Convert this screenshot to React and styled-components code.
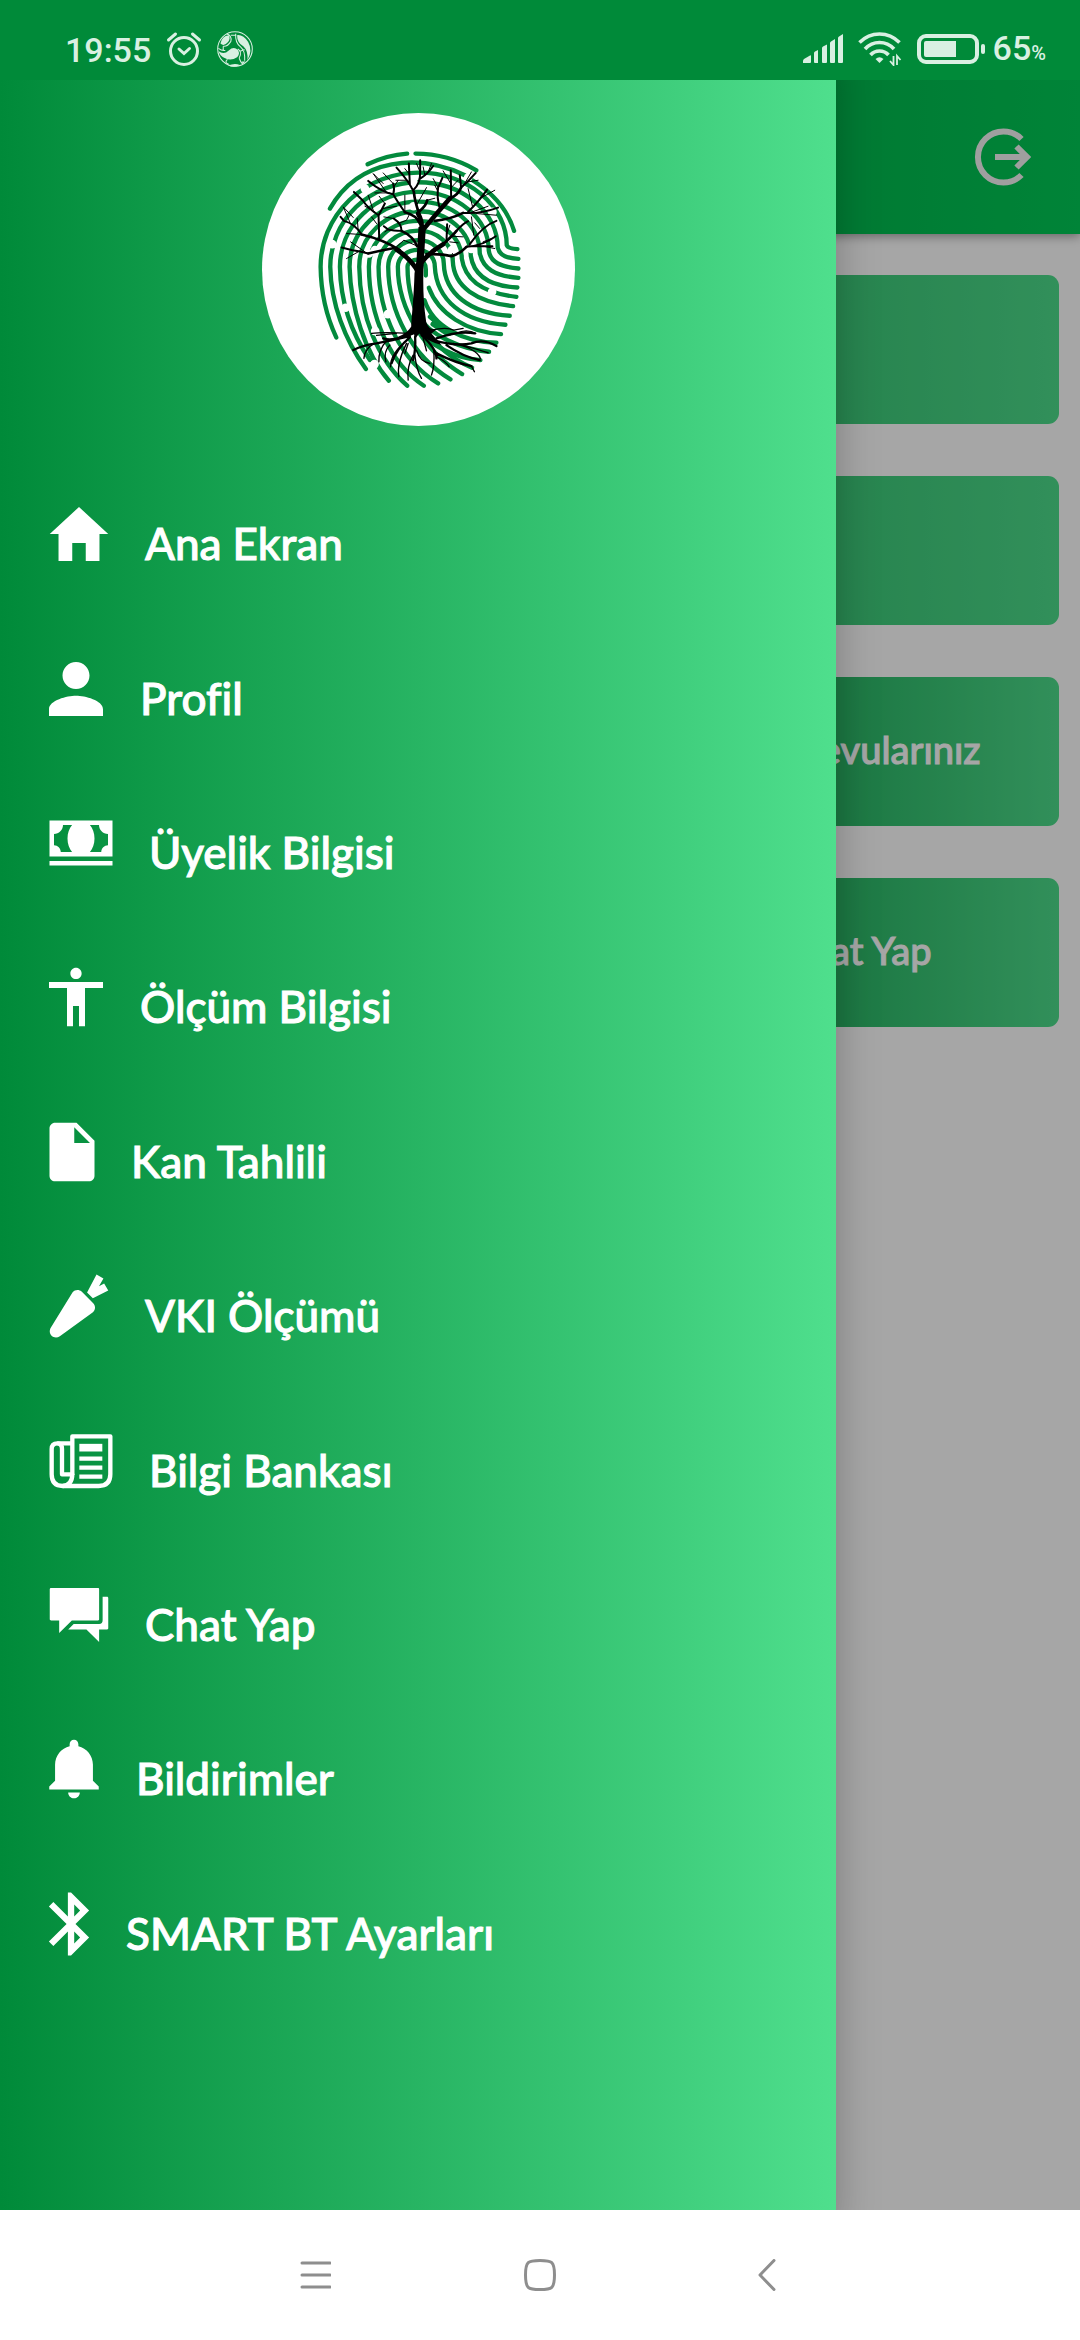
import React from 'react';
import styled, { createGlobalStyle } from 'styled-components';
import {
    IoMdHome,
    IoMdPerson,
    IoMdCash,
    IoMdBody,
    IoMdDocument,
    IoMdNutrition,
    IoMdChatboxes,
    IoMdNotifications,
    IoMdBluetooth,
} from 'react-icons/io';

const NewspaperIcon = () => (
    <svg viewBox="-13 0 216 216" fill="none" stroke="currentColor" strokeWidth="13" strokeLinejoin="round">
        <path d="M69 150 V34 H183 V148 Q183 183 148 183 H40 Q7 183 7 148 V72 Q7 55 24 55 H66" />
        <path d="M40 183 Q69 180 69 146" />
        <path d="M24 55 Q38 55 38 72 V148 H66" />
        <path d="M90 68 H159" strokeWidth="23" />
        <path d="M90 101 H159 M90 128 H159 M90 155 H159" />
    </svg>
);

// width is the drawn width of each glyph, labels start right after it
const menu = [
    { label: 'Ana Ekran', Icon: IoMdHome, width: 59 },
    { label: 'Profil', Icon: IoMdPerson, width: 54 },
    { label: 'Üyelik Bilgisi', Icon: IoMdCash, width: 63 },
    { label: 'Ölçüm Bilgisi', Icon: IoMdBody, width: 54 },
    { label: 'Kan Tahlili', Icon: IoMdDocument, width: 45 },
    { label: 'VKI Ölçümü', Icon: IoMdNutrition, width: 59 },
    { label: 'Bilgi Bankası', Icon: NewspaperIcon, width: 63 },
    { label: 'Chat Yap', Icon: IoMdChatboxes, width: 59 },
    { label: 'Bildirimler', Icon: IoMdNotifications, width: 50 },
    { label: 'SMART BT Ayarları', Icon: IoMdBluetooth, width: 40 },
];

// lower left tail and lower right head of every fingerprint ridge, outside in
const ridges = [
    { tail: '259 712 C 230 650 213 580', head: 'Q 775 445 803 447' },
    { tail: '348 807 C 285 720 243 610', head: 'C 750 468 775 474 806 476' },
    { tail: '360 780 C 305 700 272 610', head: 'C 722 488 755 500 806 505' },
    { tail: '417 842 C 345 760 302 620', head: 'C 700 505 735 528 806 533' },
    { tail: '472 857 C 385 780 330 650', head: 'C 672 525 720 558 803 562' },
    { tail: '522 857 C 420 790 358 650', head: 'C 645 535 690 578 800 590' },
    { tail: '565 850 C 450 780 387 640', head: 'C 612 560 680 605 790 618' },
    { tail: '602 838 C 490 770 416 640', head: 'C 585 580 660 640 780 647' },
    { tail: '637 822 C 530 760 444 630', head: 'C 560 600 640 665 767 674' },
    { tail: '667 803 C 540 750 473 630', head: 'V 526' },
];

const ridgePath = ({ tail, head }, i) => {
    const left = 212 + 29 * i;
    const top = 217 + 29 * i;
    const right = 771 - 27 * i;
    const shoulder = 435 + 8 * i;
    return `M ${tail} ${left} 500 A ${505 - left} ${500 - top} 0 0 1 505 ${top} A ${right - 505} ${shoulder - top} 0 0 1 ${right} ${shoulder} ${head}`;
};

const gaps = [
    [247, 432], [287, 623], [345, 265], [374, 792], [376, 693],
    [357, 460], [414, 642], [491, 246], [491, 318], [655, 232], [727, 575],
    [728, 335], [606, 450], [664, 446], [375, 450],
];

function Logo() {
    return (
        <LogoSvg viewBox="36 38 940 940" role="img" aria-label="Logo">
            <circle cx="506" cy="508" r="470" fill="#fff" />
            <g fill="none" stroke="#038a3d" strokeWidth="13" strokeLinecap="round">
                <path d="M353 192 Q412 164 472 160 M497 160 Q595 160 680 210" />
                <path d="M240 325 C330 170 510 160 645 225 M668 240 Q765 300 793 392" />
                {ridges.map((ridge, i) => (
                    <path key={i} d={ridgePath(ridge, i)} />
                ))}
                <path d="M537 563 C565 640 650 695 754 702" />
                <path d="M524 600 C550 680 640 725 740 728" />
                <path d="M500 640 C540 710 640 748 718 755" />
                <path d="M500 680 C540 740 620 775 692 780" />
                <path d="M540 650 L600 700 M548 672 L590 700" />
            </g>
            <g fill="#fff">
                {gaps.map(([x, y]) => (
                    <circle key={`${x}-${y}`} cx={x} cy={y} r="13" />
                ))}
            </g>
            <path d="M494 520 C492 590 486 640 484 680 Q470 702 440 712 Q480 708 492 700 L496 716 L508 700 Q530 722 575 735 Q560 718 545 700 L560 688 Q535 690 529 665 C521 610 519 560 521 500 L528 380 L506 380 L500 480 Z" />
            <g fill="none" stroke="#000" strokeLinecap="round" strokeLinejoin="round">
                <path
                    strokeWidth="14"
                    d="M507 520 Q488 480 440 448 M515 385 Q518 365 505 340 M512 490 Q540 455 580 432 M522 386 Q560 340 600 295"
                />
                <path
                    strokeWidth="8"
                    d="M450 450 Q400 418 335 403 M430 444 Q395 450 355 460 M530 462 Q575 460 605 468 Q632 460 650 440 M580 432 Q610 405 620 392 M502 438 Q490 408 455 392 M510 370 Q500 345 465 336 M508 340 Q495 305 492 275 M600 295 Q625 285 634 262 M555 362 Q600 358 640 338 M510 332 Q530 315 532 300"
                />
                <path
                    strokeWidth="6"
                    d="M335 403 Q315 370 282 362 L272 350 M355 460 Q330 452 308 450 L275 442 M388 415 L386 345 Q355 325 338 300 L312 275 M386 345 Q395 330 405 310 M455 392 Q430 392 415 388 L402 378 M455 392 Q455 370 432 355 M465 336 Q440 300 430 282 Q395 275 355 242 M430 282 Q435 265 430 250 M492 275 Q475 240 440 202 M480 252 L477 190 M490 270 Q512 250 511 215 V180 M511 235 Q535 220 550 197 M570 325 Q560 290 565 262 L578 232 M604 292 L603 210 M634 262 Q655 245 678 218 M634 262 L630 225 M640 338 Q690 342 745 322 M655 335 Q690 300 712 268 M620 392 Q640 370 655 363 M590 425 L592 372 M650 440 Q700 436 738 408 M660 432 Q700 375 740 362 M655 438 L728 438"
                />
                <path
                    strokeWidth="3"
                    d="M335 403 L290 400 M325 392 L322 355 M300 366 L280 320 L310 352 M345 455 L302 425 M330 452 L290 475 M375 335 L345 318 M370 330 L355 285 M405 310 L388 288 M398 325 L440 318 M380 370 L365 350 M415 388 L405 395 M432 355 L402 350 M445 370 L470 360 L480 340 M465 336 V285 M420 278 L375 278 M408 274 L370 220 L400 250 M430 250 L400 218 M432 260 L445 240 M470 240 L438 240 M477 220 L465 205 M511 215 L500 190 M525 225 L520 200 M535 215 L545 190 M500 315 L530 262 M532 300 L555 294 M565 262 L550 235 M565 275 L555 255 M603 250 L580 212 M604 262 L625 240 M640 258 L665 215 M655 245 L685 240 M668 318 L655 265 M690 295 L735 270 M680 340 L740 345 M665 336 L715 318 M592 400 L600 375 M605 408 L640 410 M672 405 L665 350 M690 385 L675 368 M700 425 L725 415 M700 438 L735 445 M604 468 L608 460 M600 425 L625 428 M503 438 L462 420 L440 440"
                />
                <path
                    strokeWidth="7"
                    d="M490 700 Q430 725 400 715 M480 708 Q420 722 380 730 Q340 735 310 750 M480 712 Q440 745 425 790 M496 710 Q498 750 490 780 M515 705 Q560 745 560 775 M550 720 Q620 740 665 730 Q700 715 740 738 M560 715 Q630 690 675 700 M590 735 Q640 770 690 780 M560 760 Q620 790 665 798"
                />
                <path
                    strokeWidth="4"
                    d="M370 732 Q345 745 342 775 M410 722 Q385 750 387 785 M420 735 Q400 755 408 785 M455 735 Q420 770 422 800 M470 730 Q440 790 447 830 M490 765 Q470 800 475 840 M495 765 Q500 810 515 835 M500 750 Q510 785 540 790 M552 750 Q555 800 545 825 M560 770 Q590 785 598 800 M665 798 L674 815 M640 735 Q690 750 715 758 M620 700 Q650 685 678 700 M545 690 Q590 680 612 690 L640 685 M610 730 Q680 745 692 775 M480 700 Q400 695 365 700 M440 700 L380 706 M475 730 L465 760 M520 715 L530 752"
                />
            </g>
        </LogoSvg>
    );
}

export default function App() {
    return (
        <>
            <GlobalStyle />
            <Page>
                <StatusBar>
                    <StatusGroup>
                        <Clock>19:55</Clock>
                        <svg width="36" height="36" viewBox="0 0 36 36" fill="none" stroke="currentColor" strokeWidth="3" strokeLinecap="round">
                            <circle cx="18" cy="20" r="13.5" />
                            <path d="M13 18 L18 22.500 L23.500 17.500 M2.500 9 L9.500 3 M26.500 3 L33.500 9" />
                        </svg>
                        <svg width="36" height="36" viewBox="0 0 104 104" fill="currentColor">
                            <circle cx="52" cy="52" r="50" fill="none" stroke="currentColor" strokeWidth="3" />
                            <path d="M10 36 Q14 14 34 12 Q40 20 32 32 Q20 46 10 36 Z" />
                            <path d="M58 12 Q76 10 90 32 Q104 56 88 84 Q90 56 76 44 Q58 34 58 12 Z" />
                            <path d="M4 58 Q20 70 34 56 Q48 44 60 54 Q68 66 58 76 Q40 88 22 78 Q10 74 4 58 Z" />
                            <path d="M32 100 Q50 92 66 98 Q50 108 32 100 Z M82 88 Q78 92 74 96 L72 88 Z" />
                            <g fill="none" stroke="currentColor" strokeWidth="3">
                                <path d="M18 44 V58 M4 50 Q14 58 24 56 M28 8 Q44 14 40 30 Q30 46 18 44 M40 12 H56 M54 8 Q52 34 68 46 Q82 58 80 86 M60 52 Q74 60 64 78 M68 58 L80 54 M30 82 Q20 92 34 96 M64 78 Q68 90 74 96" />
                            </g>
                        </svg>
                    </StatusGroup>
                    <StatusGroup>
                        <svg width="40" height="30" viewBox="0 0 40 30" fill="currentColor">
                            <path d="M0 29 V27 Q0 26 1 25 L7 21.500 Q8 21 8 22 V28 Q8 29 7 29 H0 Z" />
                            <path d="M11 19 Q11 18 12 17.500 L15 16 V29 H12 Q11 29 11 28 Z M19 14 Q19 13 20 12.500 L24 10.500 V28 Q24 29 23 29 H20 Q19 29 19 28 Z M27 9 Q27 8 28 7.500 L32 5 V28 Q32 29 31 29 H28 Q27 29 27 28 Z M35 4 Q35 3 36 2.500 L40 0 V28 Q40 29 39 29 H36 Q35 29 35 28 Z" />
                        </svg>
                        <svg width="44" height="34" viewBox="0 0 44 34" fill="none" stroke="currentColor" strokeWidth="3.600">
                            <path d="M1.500 10.500 Q10 2 21.500 2 Q33 2 41.500 10.500 M7 17 Q13 10.500 21.500 10.500 Q30 10.500 36 17 M12.500 23 Q16 19 21.500 19 Q27 19 30.500 23" />
                            <path d="M21.500 31 L17.500 27 Q21.500 23.500 25.500 27 Z" fill="currentColor" stroke="none" />
                            <path d="M35.500 24 V33 L32 29 M39 33 V24 L42.500 28" strokeWidth="1.800" />
                        </svg>
                        <Battery>
                            <svg width="68" height="30" viewBox="0 0 68 30" fill="currentColor">
                                <rect x="2" y="2" width="58" height="26" rx="7" fill="none" stroke="currentColor" strokeWidth="4" />
                                <path d="M9 7 H39 V23 H9 Q7 23 7 21 V9 Q7 7 9 7 Z" />
                                <rect x="64" y="10" width="4" height="10" rx="2" />
                            </svg>
                            <Clock>
                                65<Percent>%</Percent>
                            </Clock>
                        </Battery>
                    </StatusGroup>
                </StatusBar>

                <Stage>
                    <Screen>
                        <TopBar>
                            <LogoutButton type="button" aria-label="Çıkış">
                                <svg width="60" height="60" viewBox="0 0 60 60" fill="none" stroke="currentColor" strokeWidth="6">
                                    <path d="M47.500 12 A25.500 25.500 0 1 0 47.500 48 M21 30 H52 M42.500 19.500 L53 30 L42.500 40.500" />
                                </svg>
                            </LogoutButton>
                        </TopBar>
                        <Cards>
                            <Card $wide />
                            <Card $wide />
                            <Card>Randevularınız</Card>
                            <Card>Chat Yap</Card>
                        </Cards>
                    </Screen>
                    <Scrim />
                    <Drawer>
                        <DrawerHeader>
                            <Logo />
                        </DrawerHeader>
                        <MenuList>
                            {menu.map(({ label, Icon, width }) => (
                                <MenuItem key={label}>
                                    <MenuLink href="#">
                                        <IconBox $width={width}>
                                            <Icon />
                                        </IconBox>
                                        {label}
                                    </MenuLink>
                                </MenuItem>
                            ))}
                        </MenuList>
                    </Drawer>
                </Stage>

                <NavBar>
                    <NavButton type="button" aria-label="Son uygulamalar">
                        <svg width="32" height="32" viewBox="0 0 32 32">
                            <path d="M3 4 H31 M3 16 H31 M3 28 H31" />
                        </svg>
                    </NavButton>
                    <NavButton type="button" aria-label="Ana sayfa">
                        <svg width="32" height="32" viewBox="0 0 32 32">
                            <path d="M16 1.500 C28 1.500 30.500 2.500 30.500 16 C30.500 29.500 28 30.500 16 30.500 C4 30.500 1.500 29.500 1.500 16 C1.500 2.500 4 1.500 16 1.500 Z" />
                        </svg>
                    </NavButton>
                    <NavButton type="button" aria-label="Geri">
                        <svg width="32" height="32" viewBox="0 0 32 32">
                            <path d="M25 1.500 L11 16 L25 30.500" />
                        </svg>
                    </NavButton>
                </NavBar>
            </Page>
        </>
    );
}

const GlobalStyle = createGlobalStyle`
* {
    box-sizing: border-box;
}
body {
    margin: 0;
    background: #fff;
    font-family: Lato, 'Open Sans', sans-serif;
    font-variant-ligatures: none;
}
button {
    display: flex;
    padding: 0;
    border: none;
    background: none;
}
svg {
    display: block;
    flex-shrink: 0;
}
`;

const Page = styled.div`
    display: flex;
    flex-direction: column;
    min-height: 100vh;
`;

const StatusBar = styled.header`
    display: flex;
    justify-content: space-between;
    height: 80px;
    padding: 18px 34px 0 65px;
    background: #008a39;
    color: #d9f0e2;
`;

const StatusGroup = styled.div`
    display: flex;
    align-items: center;
    gap: 15px;
    height: 62px;
`;

const Clock = styled.span`
    padding-top: 2px;
    font-family: Roboto, sans-serif;
    font-size: 34px;
    font-weight: 500;
    line-height: 40px;
`;

const Percent = styled.small`
    font-size: 20px;
`;

const Battery = styled.div`
    display: flex;
    align-items: center;
    gap: 8px;
`;

/* screen, scrim and drawer share one cell and stack in source order */
const Stage = styled.main`
    flex: 1;
    display: grid;
    overflow: hidden;

    > * {
        grid-area: 1 / 1;
    }
`;

const Screen = styled.section`
    background: #fff;
`;

const TopBar = styled.div`
    display: flex;
    align-items: center;
    justify-content: flex-end;
    height: 154px;
    padding-right: 46px;
    background: linear-gradient(90deg, #008a39, #00cb56);
    box-shadow: 0 2px 10px rgba(0, 0, 0, 0.4);
`;

const LogoutButton = styled.button`
    color: #f4f4f4;
`;

const Cards = styled.div`
    display: grid;
    grid-template-columns: 1fr 1fr;
    grid-auto-rows: 149px;
    gap: 52px 42px;
    padding: 41px 21px;
`;

const Card = styled.div`
    display: flex;
    align-items: center;
    justify-content: center;
    grid-column: ${(props) => (props.$wide ? '1 / 3' : '2')};
    padding: 0 4px 5px 100px;
    border-radius: 11px;
    background: linear-gradient(90deg, #008a39, #4ddd8b);
    color: #fff;
    font-size: 38px;
    font-weight: 500;
    line-height: 48px;
    -webkit-text-stroke: 1px currentColor;
`;

const Scrim = styled.div`
    background: rgba(0, 0, 0, 0.35);
`;

const Drawer = styled.aside`
    display: flex;
    flex-direction: column;
    width: 836px;
    max-width: 80vw;
    background: linear-gradient(90deg, #008a39, #4fdf8d);
    box-shadow: -24px 0 40px 24px rgba(0, 0, 0, 0.26);
`;

const DrawerHeader = styled.div`
    display: flex;
    justify-content: center;
    padding: 33px 0 31px;
`;

const LogoSvg = styled.svg`
    width: 313px;
    height: 313px;
`;

const MenuList = styled.ul`
    flex: 1;
    display: grid;
    grid-auto-rows: 1fr;
    margin: 0;
    padding: 0 0 209px;
    list-style: none;
`;

const MenuItem = styled.li`
    display: flex;
    align-items: center;
    padding-left: 49px;
`;

const MenuLink = styled.a`
    display: flex;
    align-items: flex-end;
    gap: 37px;
    color: #fff;
    font-size: 44px;
    font-weight: 500;
    line-height: 54px;
    text-decoration: none;
    -webkit-text-stroke: 1px currentColor;
`;

const IconBox = styled.span`
    display: flex;
    justify-content: center;
    width: ${(props) => props.$width}px;

    svg {
        width: 72px;
        height: 72px;
    }
`;

const NavBar = styled.nav`
    display: flex;
    align-items: center;
    justify-content: center;
    gap: 193px;
    height: 130px;
    background: #fff;
`;

const NavButton = styled.button`
    svg {
        fill: none;
        stroke: #8e8e8e;
        stroke-width: 3;
        stroke-linecap: round;
        stroke-linejoin: round;
    }
`;
